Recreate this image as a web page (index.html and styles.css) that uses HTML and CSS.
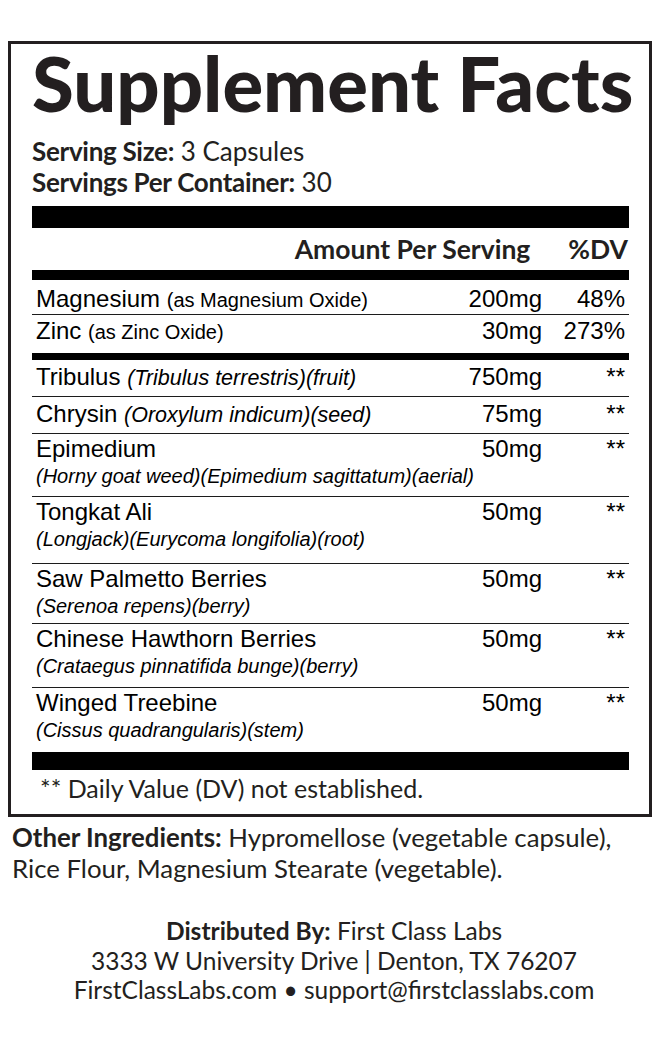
FILE: index.html
```html
<!DOCTYPE html>
<html lang="en">
<head>
<meta charset="utf-8">
<title>Supplement Facts</title>
<link rel="stylesheet" href="styles.css">
</head>
<body>
<div class="label">
  <h1 class="title">Supplement Facts</h1>
  <div class="serving">
    <div><b>Serving Size:</b> 3 Capsules</div>
    <div><b>Servings Per Container:</b> 30</div>
  </div>
  <div class="bar bar-xl"></div>
  <div class="head">
    <span>Amount Per Serving</span>
    <span class="head-dv">%DV</span>
  </div>
  <div class="bar bar-md"></div>

  <div class="row row-mag">
    <div class="line"><span class="name">Magnesium <span class="paren">(as Magnesium Oxide)</span></span><span class="amt">200mg</span><span class="dv">48%</span></div>
  </div>
  <div class="row row-zinc">
    <div class="line"><span class="name">Zinc <span class="paren">(as Zinc Oxide)</span></span><span class="amt">30mg</span><span class="dv">273%</span></div>
  </div>
  <div class="bar bar-sm"></div>

  <div class="row single">
    <div class="line"><span class="name">Tribulus <i class="latin">(Tribulus terrestris)(fruit)</i></span><span class="amt">750mg</span><span class="dv">**</span></div>
  </div>
  <div class="row single">
    <div class="line"><span class="name">Chrysin <i class="latin">(Oroxylum indicum)(seed)</i></span><span class="amt">75mg</span><span class="dv">**</span></div>
  </div>
  <div class="row double">
    <div class="line"><span class="name">Epimedium</span><span class="amt">50mg</span><span class="dv">**</span></div>
    <i class="sub">(Horny goat weed)(Epimedium sagittatum)(aerial)</i>
  </div>
  <div class="row double tall">
    <div class="line"><span class="name">Tongkat Ali</span><span class="amt">50mg</span><span class="dv">**</span></div>
    <i class="sub">(Longjack)(Eurycoma longifolia)(root)</i>
  </div>
  <div class="row double short">
    <div class="line"><span class="name">Saw Palmetto Berries</span><span class="amt">50mg</span><span class="dv">**</span></div>
    <i class="sub">(Serenoa repens)(berry)</i>
  </div>
  <div class="row double mid">
    <div class="line"><span class="name">Chinese Hawthorn Berries</span><span class="amt">50mg</span><span class="dv">**</span></div>
    <i class="sub">(Crataegus pinnatifida bunge)(berry)</i>
  </div>
  <div class="row double last">
    <div class="line"><span class="name">Winged Treebine</span><span class="amt">50mg</span><span class="dv">**</span></div>
    <i class="sub">(Cissus quadrangularis)(stem)</i>
  </div>

  <div class="bar bar-lg"></div>
  <p class="note">** Daily Value (DV) not established.</p>
</div>

<p class="other"><b>Other Ingredients:</b> Hypromellose (vegetable capsule),<br>Rice Flour, Magnesium Stearate (vegetable).</p>

<div class="dist">
  <div><b>Distributed By:</b> First Class Labs</div>
  <div>3333 W University Drive | Denton, TX 76207</div>
  <div>FirstClassLabs.com &bull; support@firstclasslabs.com</div>
</div>
</body>
</html>
```
FILE: styles.css
```css
* { box-sizing: border-box; }

body {
  margin: 0;
  background: #ffffff;
  color: #231f20;
  font-family: "Lato", "Open Sans", sans-serif;
}

.label {
  width: 644px;
  margin: 41px 0 0 8px;
  border: 3px solid #231f20;
  padding: 0 20px 0 21px;
}

.title {
  margin: 2px 0 0 0;
  font-size: 76px;
  line-height: 74px;
  font-weight: 900;
  letter-spacing: 0;
  color: #231f20;
  white-space: nowrap;
}

.serving {
  margin-top: 16px;
  font-size: 26px;
  line-height: 31px;
  font-weight: 400;
}
.serving b { font-weight: 700; letter-spacing: -0.3px; }

.bar { background: #000; }
.bar-xl { height: 22px; margin-top: 8px; }
.bar-md { height: 10px; }
.bar-sm { height: 7px; }
.bar-lg { height: 18px; }

.head {
  height: 42px;
  display: flex;
  justify-content: flex-end;
  gap: 38px;
  padding-right: 1px;
  font-size: 26.5px;
  line-height: 42px;
  font-weight: 700;
}

.row {
  font-family: "Liberation Sans", Arial, sans-serif;
  color: #000;
  border-bottom: 1px solid #1c1c1c;
  padding: 0 4px;
}

.line {
  display: grid;
  grid-template-columns: 1fr auto 83px;
  font-size: 24px;
  line-height: 28px;
  white-space: nowrap;
}
.amt { text-align: right; }
.dv { text-align: right; }

.paren { font-size: 20px; line-height: 20px; }
.latin { font-size: 21.5px; line-height: 20px; }

.sub {
  display: block;
  font-size: 20px;
  line-height: 27px;
  white-space: nowrap;
}

.row-mag { padding-top: 5px; padding-bottom: 1px; }
.row-zinc { padding-top: 2px; padding-bottom: 8px; border-bottom: 0; }
.single { padding-top: 3px; padding-bottom: 5px; }
.double { padding-top: 1px; padding-bottom: 6px; }
.double.tall { padding-bottom: 10px; }
.double.short { padding-bottom: 3px; }
.double.mid { padding-bottom: 7px; }
.double.last { padding-bottom: 8px; border-bottom: 0; }

.note {
  margin: 0;
  padding: 3px 0 11px 8px;
  font-size: 25px;
  line-height: 30px;
}

.other {
  margin: 5px 0 0 0;
  padding-left: 12px;
  font-size: 25.8px;
  line-height: 31px;
  white-space: nowrap;
}
.other b { font-weight: 700; }

.dist {
  margin-top: 32px;
  text-align: center;
  font-size: 24.5px;
  line-height: 29.5px;
}
.dist b { font-weight: 700; }
```
